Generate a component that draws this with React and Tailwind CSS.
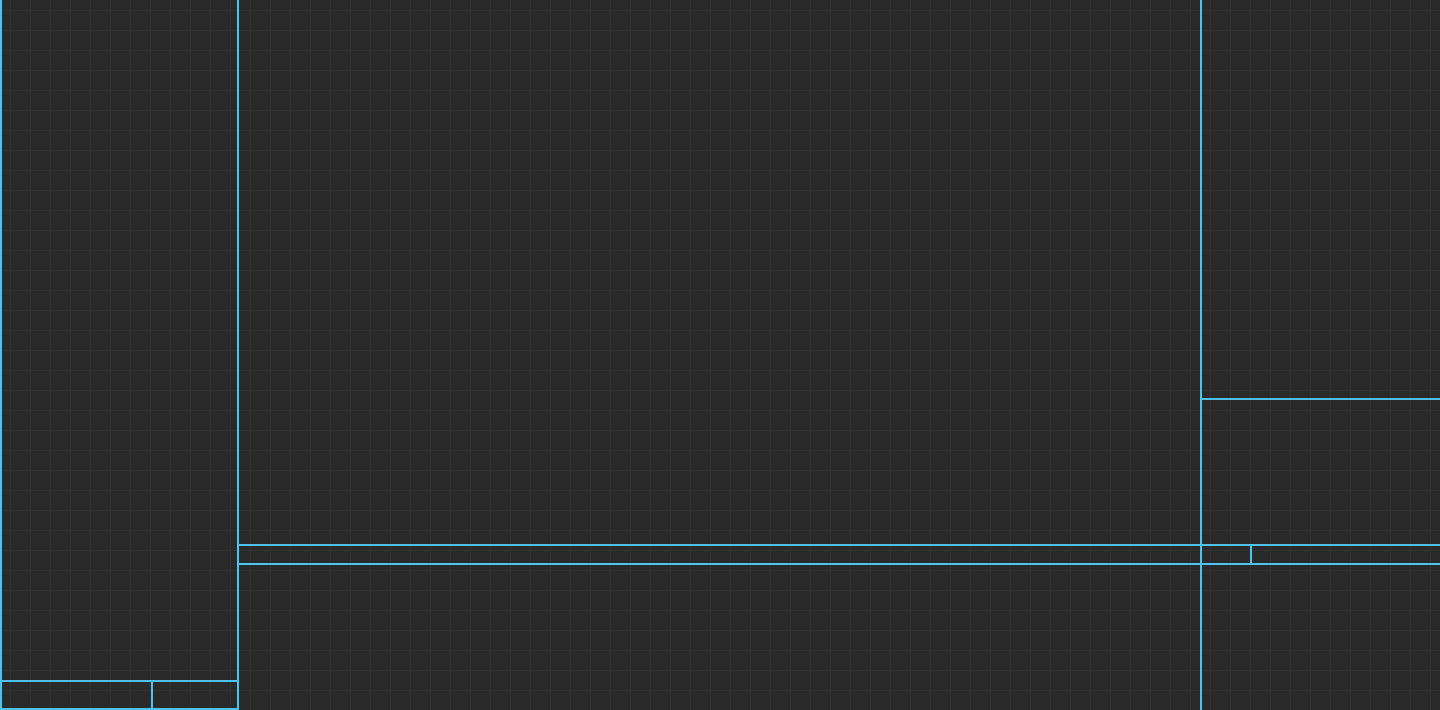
import React from 'react';

// Cadre vide : panneaux délimités par des bordures cyan sur une grille sombre
const Panel = ({ className = '' }) => <div className={className} />;

const App = () => {
  return (
    <div className="h-[710px] w-[1440px] overflow-hidden bg-[#2a2a2a] bg-[linear-gradient(to_right,#313131_1px,transparent_1px),linear-gradient(to_bottom,#313131_1px,transparent_1px)] bg-[size:20px_20px] bg-[position:10px_10px] flex">
      {/* Colonne gauche */}
      <div className="w-[239px] h-full flex flex-col border-x-2 border-b-2 border-[#4fc3f0]">
        <Panel className="flex-1" />
        <div className="h-[28px] border-t-2 border-[#4fc3f0] flex">
          <Panel className="w-[151px] border-r-2 border-[#4fc3f0]" />
          <Panel className="flex-1" />
        </div>
      </div>

      {/* Zone centrale */}
      <div className="w-[963px] h-full flex flex-col border-r-2 border-[#4fc3f0]">
        <Panel className="h-[544px]" />
        <Panel className="h-[21px] border-y-2 border-[#4fc3f0]" />
        <Panel className="flex-1" />
      </div>

      {/* Colonne droite */}
      <div className="flex-1 h-full flex flex-col">
        <Panel className="h-[400px] border-b-2 border-[#4fc3f0]" />
        <Panel className="h-[144px]" />
        <div className="h-[21px] border-y-2 border-[#4fc3f0] flex">
          <Panel className="w-[50px] border-r-2 border-[#4fc3f0]" />
          <Panel className="flex-1" />
        </div>
        <Panel className="flex-1" />
      </div>
    </div>
  );
};

export default App;
